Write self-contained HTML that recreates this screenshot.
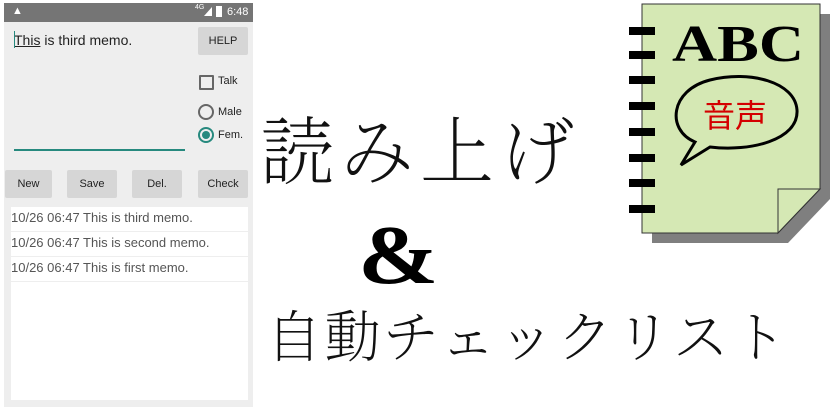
<!DOCTYPE html>
<html><head><meta charset="utf-8"><style>
body{margin:0;width:839px;height:410px;background:#fff;position:relative;overflow:hidden;font-family:"Liberation Sans",sans-serif}
.a{position:absolute}
.btn{position:absolute;background:#d6d6d6;border-radius:2px;font-size:11px;color:#222;text-align:center;line-height:28px;height:28px}
.row{position:absolute;left:11px;width:237px;height:24px;border-bottom:1px solid #eee;font-size:13px;color:#555;line-height:22px;padding-left:0}
.jp{font-family:"Noto Serif CJK JP","Noto Serif CJK SC",serif;font-weight:200;color:#111;white-space:nowrap}
</style></head><body>
<div class="a" style="left:4px;top:3px;width:249px;height:404px;background:#eeeeee"></div>
<div class="a" style="left:4px;top:3px;width:249px;height:19px;background:#757575;color:#fff;font-size:11px">
 <span class="a" style="left:8px;top:2px;font-size:11px">▲</span>
 <span class="a" style="left:191px;top:1px;font-size:7px">4G</span>
 <span class="a" style="left:200px;top:4px;width:0;height:0;border-left:8px solid transparent;border-bottom:9px solid #fff"></span>
 <span class="a" style="left:212px;top:3px;width:6px;height:11px;background:#fff"></span>
 <span class="a" style="left:223px;top:3px;font-size:11px">6:48</span>
</div>
<div class="a" style="left:14px;top:32px;font-size:14px;color:#222"><span style="text-decoration:underline">This</span> is third memo.</div>
<div class="a" style="left:14px;top:31px;width:1px;height:17px;background:#26897e"></div>
<div class="a" style="left:14px;top:149px;width:171px;height:2px;background:#26897e"></div>
<div class="btn" style="left:198px;top:27px;width:50px">HELP</div>
<div class="a" style="left:199px;top:75px;width:11px;height:11px;border:2px solid #666;border-radius:1px"></div>
<div class="a" style="left:218px;top:75px;font-size:11px;color:#222">Talk</div>
<div class="a" style="left:198px;top:104px;width:12px;height:12px;border:2px solid #666;border-radius:50%"></div>
<div class="a" style="left:218px;top:106px;font-size:11px;color:#222">Male</div>
<div class="a" style="left:198px;top:127px;width:12px;height:12px;border:2px solid #26897e;border-radius:50%"></div>
<div class="a" style="left:202px;top:131px;width:8px;height:8px;background:#26897e;border-radius:50%"></div>
<div class="a" style="left:218px;top:129px;font-size:11px;color:#222">Fem.</div>
<div class="btn" style="left:5px;top:170px;width:47px">New</div>
<div class="btn" style="left:67px;top:170px;width:50px">Save</div>
<div class="btn" style="left:132px;top:170px;width:50px">Del.</div>
<div class="btn" style="left:198px;top:170px;width:50px">Check</div>
<div class="a" style="left:11px;top:207px;width:237px;height:193px;background:#fff"></div>
<div class="row" style="top:207px">10/26 06:47 This is third memo.</div>
<div class="row" style="top:232px">10/26 06:47 This is second memo.</div>
<div class="row" style="top:257px">10/26 06:47 This is first memo.</div>

<div class="a jp" style="left:260px;top:94px;font-size:74px;letter-spacing:6px">読み上げ</div>
<div class="a" style="left:358px;top:207px;font-family:'Liberation Serif',serif;font-weight:bold;font-size:84px;color:#000;transform:scaleX(1.15);transform-origin:left">&amp;</div>
<div class="a jp" style="left:266px;top:294px;font-size:56px;letter-spacing:2.5px">自動チェックリスト</div>

<svg class="a" style="left:600px;top:0" width="239" height="250">
 <polygon points="52,14 230,14 230,199 188,243 52,243" fill="#7f7f7f"/>
 <polygon points="42,4 220,4 220,189 178,233 42,233" fill="#d5e8b4" stroke="#333" stroke-width="1"/>
 <polygon points="220,189 178,189 178,233" fill="#d5e8b4" stroke="#333" stroke-width="1"/>
 <g fill="#000">
  <rect x="29" y="27" width="26" height="8"/><rect x="29" y="51" width="26" height="8"/>
  <rect x="29" y="76" width="26" height="8"/><rect x="29" y="102" width="26" height="8"/>
  <rect x="29" y="128" width="26" height="8"/><rect x="29" y="154" width="26" height="8"/>
  <rect x="29" y="179" width="26" height="8"/><rect x="29" y="205" width="26" height="8"/>
 </g>
 <text x="72" y="61" font-family="Liberation Serif,serif" font-weight="bold" font-size="52" fill="#000" textLength="132" lengthAdjust="spacingAndGlyphs">ABC</text>
 <path d="M95,142 C66,130 70,90 110,80 C150,70 195,82 197,110 C199,140 150,152 110,147 L81,165 Z" fill="#d5e8b4" stroke="#000" stroke-width="3"/>
 <text x="103" y="127" font-family="Noto Sans CJK JP,sans-serif" font-size="32" fill="#d40000">音声</text>
</svg>
</body></html>
